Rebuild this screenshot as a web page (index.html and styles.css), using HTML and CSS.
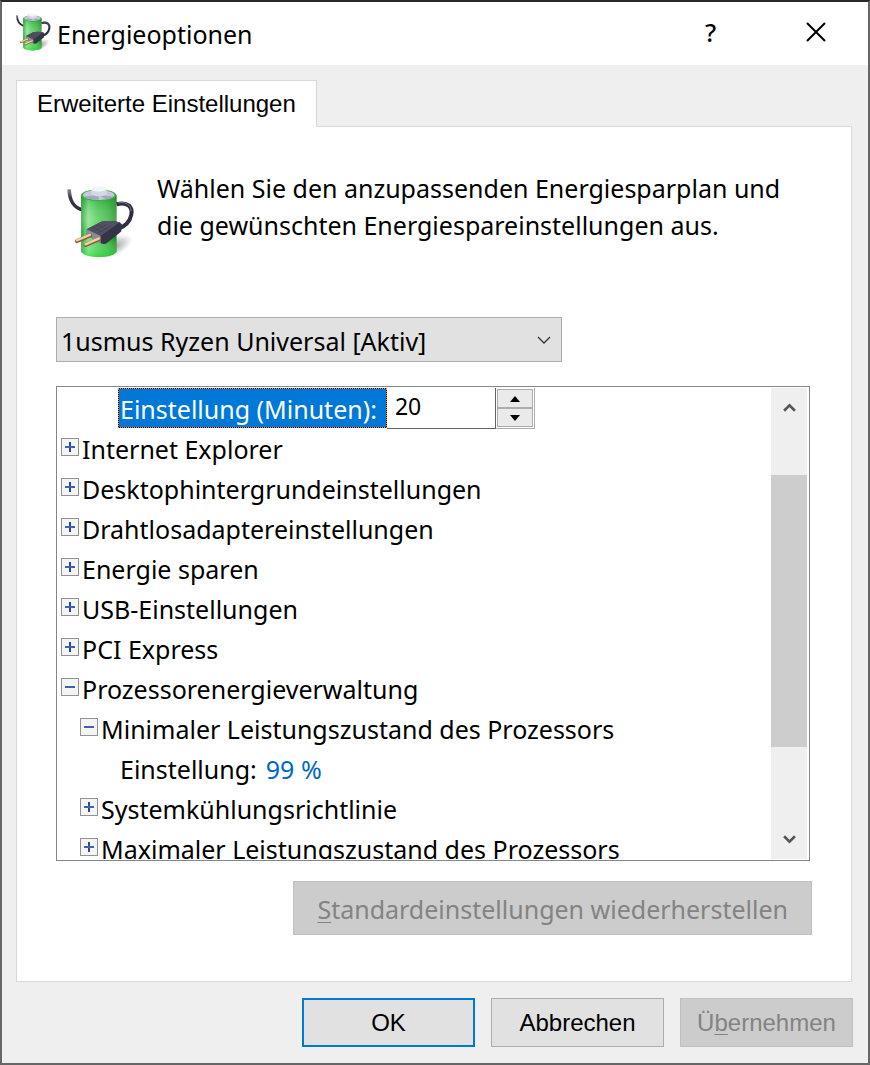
FILE: index.html
```html
<!DOCTYPE html>
<html lang="de">
<head>
    <meta charset="UTF-8">
    <meta name="viewport" content="width=device-width, initial-scale=1.0">
    <title>Energieoptionen</title>
    <link rel="stylesheet" href="styles.css">
</head>
<body>
    <svg class="symbols" aria-hidden="true">
        <defs>
            <linearGradient id="green" x1="0" x2="1" y1="0" y2="0">
                <stop offset="0" stop-color="#1f9c2b"/>
                <stop offset="0.2" stop-color="#7fe387"/>
                <stop offset="0.45" stop-color="#4fcb58"/>
                <stop offset="0.75" stop-color="#35b33c"/>
                <stop offset="1" stop-color="#1a8a22"/>
            </linearGradient>
            <linearGradient id="shine" x1="0" x2="0" y1="0" y2="1">
                <stop offset="0" stop-color="#0a8a14" stop-opacity="0.4"/>
                <stop offset="0.4" stop-color="#ffffff" stop-opacity="0.2"/>
                <stop offset="0.7" stop-color="#ffffff" stop-opacity="0"/>
                <stop offset="1" stop-color="#1fe030" stop-opacity="0.6"/>
            </linearGradient>
            <linearGradient id="cord" x1="0" x2="0" y1="0" y2="1">
                <stop offset="0" stop-color="#8b8b98"/>
                <stop offset="0.4" stop-color="#3a3a4c"/>
                <stop offset="1" stop-color="#2c2c3e"/>
            </linearGradient>
            <radialGradient id="shadow">
                <stop offset="0" stop-color="#000" stop-opacity="0.4"/>
                <stop offset="1" stop-color="#000" stop-opacity="0"/>
            </radialGradient>
            <symbol id="battery" viewBox="30 45 210 220">
                <ellipse cx="170" cy="232" rx="64" ry="28" fill="url(#shadow)" transform="rotate(-25 170 232)"/>
                <path d="M39 58C40 88 48 112 80 120" fill="none" stroke="url(#cord)" stroke-width="11"/>
                <path d="M75 76v168c0 9 22 18 53 18s54-9 54-18V76z" fill="url(#green)"/>
                <path d="M75 76v168c0 9 22 18 53 18s54-9 54-18V76z" fill="url(#shine)"/>
                <ellipse cx="128" cy="76" rx="53" ry="18" fill="#3fae48"/>
                <ellipse cx="128" cy="75" rx="47" ry="15" fill="#c6c9da"/>
                <path d="M128 75l-45 5c5 6 23 10 45 10zM128 75l44 5c-4 5-12 7-22 9z" fill="#a4a8bf"/>
                <path d="M106 57v13c0 5 10 9 22 9s24-4 24-9V57z" fill="#d3dae5"/>
                <ellipse cx="129" cy="57" rx="23" ry="8" fill="#f0f5fa"/>
                <path d="M182 103C216 94 232 112 226 136C222 155 207 170 187 177" fill="none" stroke="#2e2e40" stroke-width="12"/>
                <path d="M186 99C210 94 226 106 226 124" fill="none" stroke="#77778a" stroke-width="3"/>
                <path d="M92 178l41-21c16-5 38-4 58 0l7 6-2 22-42 34c-6 5-13 5-20 1l-42-24z" fill="#343446"/>
                <path d="M92 178l41-21c16-5 38-4 58 0l-57 42z" fill="#515162"/>
                <path d="M92 178l42 21v22l-42-25z" fill="#8a8b9c"/>
                <path d="M105 177l34-16M116 183l36-19M128 190l36-22M108 171l36 17M120 165l34 15" stroke="#343446" stroke-width="1"/>
                <path d="M62 214l41-17M88 226l42-18" stroke="#8c603c" stroke-width="12" stroke-linecap="round"/>
                <path d="M62 212l40-17M88 224l41-18" stroke="#f2d2a0" stroke-width="7" stroke-linecap="round"/>
            </symbol>
        </defs>
    </svg>

    <div class="window">
        <header class="title-bar">
            <svg class="title-icon" aria-hidden="true"><use href="#battery"/></svg>
            <h1>Energieoptionen</h1>
            <button class="title-button" type="button" aria-label="Hilfe">?</button>
            <button class="title-button" type="button" aria-label="Schließen">
                <svg width="22" height="22" viewBox="0 0 22 22"><path d="M2 2l18 18M20 2L2 20" fill="none" stroke="#000" stroke-width="2"/></svg>
            </button>
        </header>

        <main class="content">
            <div class="tabs" role="tablist">
                <button class="tab" type="button" role="tab" aria-selected="true">Erweiterte Einstellungen</button>
            </div>

            <section class="panel">
                <div class="intro">
                    <svg class="intro-icon" aria-hidden="true"><use href="#battery"/></svg>
                    <p>Wählen Sie den anzupassenden Energiesparplan und die gewünschten Energiespareinstellungen aus.</p>
                </div>

                <div class="plan">
                    <select aria-label="Energiesparplan">
                        <option>1usmus Ryzen Universal [Aktiv]</option>
                    </select>
                    <svg class="plan-arrow" viewBox="0 0 14 8" aria-hidden="true"><path d="M1 1l6 6 6-6" fill="none" stroke="#333" stroke-width="1.3"/></svg>
                </div>

                <div class="tree-box">
                    <ul class="tree">
                        <li class="level-3 editing">
                            <label for="minutes">Einstellung (Minuten):</label>
                            <input id="minutes" type="text" value="20">
                            <span class="spinner">
                                <button type="button" aria-label="Mehr"><svg viewBox="0 0 10 6"><path d="M0 6l5-6 5 6z"/></svg></button>
                                <button type="button" aria-label="Weniger"><svg viewBox="0 0 10 6"><path d="M0 0l5 6 5-6z"/></svg></button>
                            </span>
                        </li>
                        <li><button class="toggle plus" type="button" aria-label="Erweitern"></button>Internet Explorer</li>
                        <li><button class="toggle plus" type="button" aria-label="Erweitern"></button>Desktophintergrundeinstellungen</li>
                        <li><button class="toggle plus" type="button" aria-label="Erweitern"></button>Drahtlosadaptereinstellungen</li>
                        <li><button class="toggle plus" type="button" aria-label="Erweitern"></button>Energie sparen</li>
                        <li><button class="toggle plus" type="button" aria-label="Erweitern"></button>USB-Einstellungen</li>
                        <li><button class="toggle plus" type="button" aria-label="Erweitern"></button>PCI Express</li>
                        <li><button class="toggle" type="button" aria-label="Reduzieren"></button>Prozessorenergieverwaltung</li>
                        <li class="level-2"><button class="toggle" type="button" aria-label="Reduzieren"></button>Minimaler Leistungszustand des Prozessors</li>
                        <li class="level-3">Einstellung: <a href="#">99 %</a></li>
                        <li class="level-2"><button class="toggle plus" type="button" aria-label="Erweitern"></button>Systemkühlungsrichtlinie</li>
                        <li class="level-2"><button class="toggle plus" type="button" aria-label="Erweitern"></button>Maximaler Leistungszustand des Prozessors</li>
                    </ul>
                    <div class="scrollbar">
                        <button type="button" aria-label="Nach oben"><svg viewBox="0 0 12 10"><path d="M1 8l5-5 5 5" fill="none" stroke="#555" stroke-width="2.4"/></svg></button>
                        <div class="track"><div class="thumb"></div></div>
                        <button type="button" aria-label="Nach unten"><svg viewBox="0 0 12 10"><path d="M1 2l5 5 5-5" fill="none" stroke="#555" stroke-width="2.4"/></svg></button>
                    </div>
                </div>

                <button class="button restore" type="button" disabled><span><u>S</u>tandardeinstellungen wiederherstellen</span></button>
            </section>
        </main>

        <footer class="actions">
            <button class="button default" type="button">OK</button>
            <button class="button" type="button">Abbrechen</button>
            <button class="button" type="button" disabled><span>Ü<u>b</u>ernehmen</span></button>
        </footer>
    </div>
</body>
</html>
```
FILE: styles.css
```css
* {
    box-sizing: border-box;
}

body {
    margin: 0;
    font-family: "Noto Sans", "Segoe UI", sans-serif;
    font-size: 25px;
    color: #000;
}

button,
input,
select {
    margin: 0;
    padding: 0;
    font: inherit;
    color: inherit;
    border-radius: 0;
}

.symbols {
    position: absolute;
    width: 0;
    height: 0;
}

.window {
    display: flex;
    flex-direction: column;
    height: 100vh;
    background-color: #efefef;
    border: 2px solid #666;
    border-top-color: #2a2828;
}

/* Title bar */
.title-bar {
    display: flex;
    align-items: center;
    height: 63px;
    padding-left: 13px;
    background-color: #fff;
}

.title-bar h1 {
    flex: 1;
    margin: 0 0 0 5px;
    font-size: 25px;
    font-weight: normal;
}

.title-icon {
    width: 37px;
    height: 38px;
    margin-bottom: 4px;
}

.title-button {
    display: flex;
    align-items: center;
    justify-content: center;
    width: 105px;
    height: 60px;
    margin-bottom: 3px;
    border: none;
    background: none;
    font-weight: 500;
}

/* Tab and panel */
.content {
    display: flex;
    flex: 1;
    flex-direction: column;
    min-height: 0;
    padding: 15px 16px 16px 14px;
}

.tabs {
    display: flex;
}

.tab {
    position: relative;
    height: 47px;
    padding: 0 20px;
    margin-bottom: -1px;
    border: 1px solid #d9d9d9;
    border-bottom: none;
    background-color: #fff;
    font-family: "Liberation Sans", Arial, sans-serif;
    font-size: 24px;
}

.panel {
    display: flex;
    flex: 1;
    flex-direction: column;
    min-height: 0;
    padding: 43px 39px 46px;
    border: 1px solid #d9d9d9;
    background-color: #fff;
}

.intro {
    display: flex;
    gap: 21px;
    padding-left: 10px;
    margin-bottom: 59px;
}

.intro p {
    flex: 1;
    margin: 0;
    line-height: 37px;
}

.intro-icon {
    width: 70px;
    height: 73px;
    margin-top: 15px;
}

.plan {
    position: relative;
    width: 506px;
    max-width: 100%;
    margin-bottom: 24px;
}

.plan select {
    display: block;
    width: 100%;
    height: 45px;
    padding: 2px 0 0 4px;
    border: 1px solid #adadad;
    background-color: #e1e1e1;
    appearance: none;
}

.plan-arrow {
    position: absolute;
    top: 19px;
    right: 11px;
    width: 14px;
    height: 8px;
    pointer-events: none;
}

/* Settings tree */
.tree-box {
    display: flex;
    flex: 1;
    min-height: 0;
    margin: 0 2px 20px 0;
    padding: 1px 2px 1px 0;
    border: 1px solid #828790;
}

.tree {
    flex: 1;
    margin: 0;
    padding: 0 0 0 4px;
    overflow: hidden;
    list-style: none;
}

.tree li {
    display: flex;
    align-items: center;
    height: 40px;
    padding-top: 2px;
    white-space: nowrap;
}

.tree .level-2 {
    padding-left: 19px;
}

.tree .level-3 {
    padding-left: 59px;
}

.tree a {
    margin-left: 9px;
    color: #0066cc;
    text-decoration: none;
}

.tree .editing {
    align-items: flex-start;
    padding: 0 0 0 57px;
}

.editing label {
    height: 40px;
    padding: 0 9px 0 1px;
    border: 1px dotted #ff8728;
    background: linear-gradient(#0078d7, #0078d7) padding-box, #000 border-box;
    color: #fff;
    line-height: 40px;
}

.editing input {
    width: 109px;
    height: 41px;
    padding: 0 8px 4px;
    border: 1px solid #646464;
    border-width: 0 1px 1px 0;
    background-color: #fff;
    font-size: 23px;
    outline: none;
}

.spinner {
    display: flex;
    flex-direction: column;
    width: 39px;
    height: 41px;
    padding: 1px;
    border: 1px solid #adadad;
    border-width: 0 1px 1px 0;
}

.spinner button {
    display: flex;
    flex: 1;
    align-items: center;
    justify-content: center;
    border: 1px solid #adadad;
    background-color: #eaeaea;
}

.spinner svg {
    width: 10px;
    height: 6px;
}

.toggle {
    width: 18px;
    height: 18px;
    margin: 0 3px 4px 0;
    border: 1px solid #919191;
    background-color: #f4f4f4;
    background-image: linear-gradient(#4060b0, #4060b0);
    background-position: center;
    background-repeat: no-repeat;
    background-size: 10px 2px;
}

.toggle.plus {
    background-image: linear-gradient(#4060b0, #4060b0), linear-gradient(#30488c, #30488c);
    background-size: 10px 2px, 2px 10px;
}

.scrollbar {
    display: flex;
    flex-direction: column;
    width: 36px;
    background-color: #efefef;
}

.scrollbar button {
    display: flex;
    align-items: center;
    justify-content: center;
    height: 39px;
    border: none;
    background: none;
}

.scrollbar svg {
    width: 13px;
    height: 11px;
}

.track {
    display: flex;
    flex: 1;
    flex-direction: column;
    padding: 48px 0 73px;
}

.thumb {
    flex: 1;
    background-color: #cdcdcd;
}

/* Buttons */
.button {
    width: 173px;
    height: 49px;
    border: 1px solid #adadad;
    background-color: #e1e1e1;
    font-family: "Liberation Sans", Arial, sans-serif;
    font-size: 24px;
}

.button.default {
    border: 2px solid #0078d7;
}

.button:disabled {
    border-color: #bfbfbf;
    background-color: #ccc;
    color: #838383;
}

.button u {
    text-decoration-thickness: 1px;
    text-underline-offset: 3px;
}

.restore {
    flex-shrink: 0;
    align-self: flex-end;
    width: auto;
    height: 54px;
    padding: 2px 23px 0;
    font-family: "Noto Sans", "Segoe UI", sans-serif;
    font-size: 25px;
}

.actions {
    display: flex;
    justify-content: flex-end;
    gap: 16px;
    padding: 0 15px 16px;
}
```
